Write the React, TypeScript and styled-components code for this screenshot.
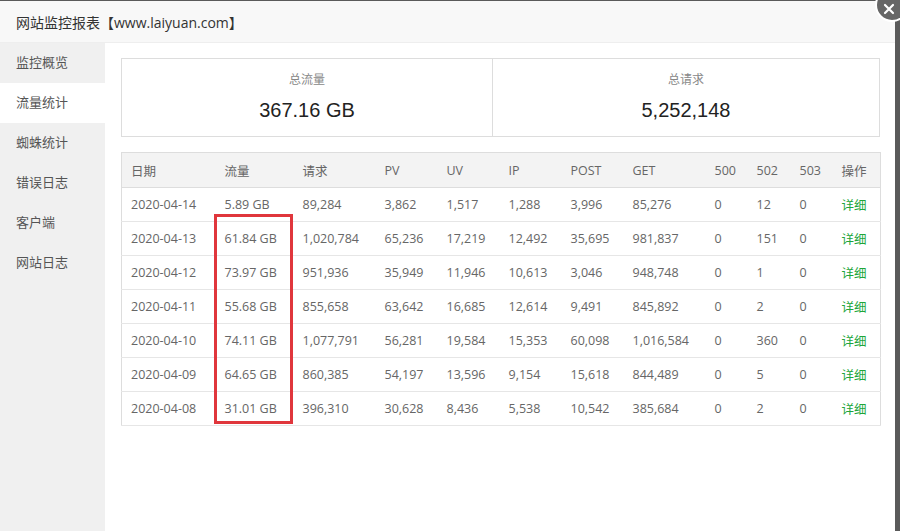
import React from 'react';
import styled, { createGlobalStyle } from 'styled-components';

const GlobalStyle = createGlobalStyle`
  html, body {
    margin: 0;
    padding: 0;
    background: #5a5a5a;
    overflow: hidden;
  }
  body {
    font-family: "Open Sans", "Noto Sans CJK SC", sans-serif;
  }
`;

const Page = styled.div`
  width: 900px;
  height: 531px;
  padding-top: 1px;
  box-sizing: border-box;
  position: relative;
`;

const Dialog = styled.div`
  width: 895px;
  height: 530px;
  background: #fff;
  display: flex;
  flex-direction: column;
`;

const TitleBar = styled.div`
  height: 42px;
  flex-shrink: 0;
  box-sizing: border-box;
  background: #f8f8f8;
  border-bottom: 1px solid #eee;
  padding-left: 16px;
  display: flex;
  align-items: center;
  font-size: 14px;
  color: #333;
`;

const Close = styled.div`
  position: absolute;
  top: -12px;
  right: -9px;
  width: 30px;
  height: 30px;
  border-radius: 50%;
  background: #666;
  border: 2px solid #fff;
  display: flex;
  align-items: center;
  justify-content: center;
`;

const Body = styled.div`
  flex: 1;
  display: flex;
`;

const Side = styled.div`
  width: 105px;
  background: #f0f0f0;
  display: flex;
  flex-direction: column;
`;

const SideItem = styled.div<{ $active?: boolean }>`
  height: 40px;
  box-sizing: border-box;
  padding: 0 0 3px 16px;
  display: flex;
  align-items: center;
  font-size: 13px;
  color: #555;
  background: ${p => (p.$active ? '#fff' : 'transparent')};
`;

const Main = styled.div`
  flex: 1;
  padding: 15px 15px 0 16px;
  display: flex;
  flex-direction: column;
  gap: 15px;
`;

const Summary = styled.div`
  height: 79px;
  box-sizing: border-box;
  border: 1px solid #ddd;
  display: grid;
  grid-template-columns: 371px 1fr;
`;

const Stat = styled.div<{ $first?: boolean }>`
  display: flex;
  flex-direction: column;
  align-items: center;
  padding-top: 13px;
  border-right: ${p => (p.$first ? '1px solid #ddd' : 'none')};
`;

const StatLabel = styled.div`
  font-size: 12px;
  color: #888;
  line-height: 16px;
`;

const StatValue = styled.div`
  margin-top: 10px;
  font-family: "Liberation Sans", Arial, sans-serif;
  font-size: 20px;
  color: #222;
  line-height: 24px;
`;

const TableWrap = styled.div`
  position: relative;
  width: 759px;
`;

const Table = styled.table`
  width: 100%;
  border-collapse: collapse;
  border: 1px solid #ddd;
  table-layout: fixed;
  font-size: 12.5px;
  color: #666;
`;

const Th = styled.th`
  height: 34px;
  padding: 0 0 0 9px;
  text-align: left;
  font-weight: normal;
  background: #f3f3f3;
  border-bottom: 1px solid #ddd;
  color: #666;
`;

const Td = styled.td`
  height: 33px;
  padding: 0 0 0 9px;
  border-bottom: 1px solid #e6e6e6;
  white-space: nowrap;
`;

const Link = styled.span`
  color: #20a53a;
`;

const Highlight = styled.div`
  position: absolute;
  left: 93px;
  top: 62px;
  width: 73px;
  height: 204px;
  border: 3px solid #e0363c;
`;

const cols = [94, 78, 82, 62, 62, 62, 62, 82, 42, 43, 42, 48];
const heads = ['日期', '流量', '请求', 'PV', 'UV', 'IP', 'POST', 'GET', '500', '502', '503', '操作'];

const rows = [
  ['2020-04-14', '5.89 GB', '89,284', '3,862', '1,517', '1,288', '3,996', '85,276', '0', '12', '0'],
  ['2020-04-13', '61.84 GB', '1,020,784', '65,236', '17,219', '12,492', '35,695', '981,837', '0', '151', '0'],
  ['2020-04-12', '73.97 GB', '951,936', '35,949', '11,946', '10,613', '3,046', '948,748', '0', '1', '0'],
  ['2020-04-11', '55.68 GB', '855,658', '63,642', '16,685', '12,614', '9,491', '845,892', '0', '2', '0'],
  ['2020-04-10', '74.11 GB', '1,077,791', '56,281', '19,584', '15,353', '60,098', '1,016,584', '0', '360', '0'],
  ['2020-04-09', '64.65 GB', '860,385', '54,197', '13,596', '9,154', '15,618', '844,489', '0', '5', '0'],
  ['2020-04-08', '31.01 GB', '396,310', '30,628', '8,436', '5,538', '10,542', '385,684', '0', '2', '0'],
];

const menu = ['监控概览', '流量统计', '蜘蛛统计', '错误日志', '客户端', '网站日志'];

export default function App() {
  return (
    <Page>
      <GlobalStyle />
      <Dialog>
        <TitleBar>网站监控报表【www.laiyuan.com】</TitleBar>
        <Body>
          <Side>
            {menu.map(m => (
              <SideItem key={m} $active={m === '流量统计'}>{m}</SideItem>
            ))}
          </Side>
          <Main>
            <Summary>
              <Stat $first>
                <StatLabel>总流量</StatLabel>
                <StatValue>367.16 GB</StatValue>
              </Stat>
              <Stat>
                <StatLabel>总请求</StatLabel>
                <StatValue>5,252,148</StatValue>
              </Stat>
            </Summary>
            <TableWrap>
              <Table>
                <colgroup>
                  {cols.map((w, i) => <col key={i} style={{ width: w }} />)}
                </colgroup>
                <thead>
                  <tr>{heads.map(h => <Th key={h}>{h}</Th>)}</tr>
                </thead>
                <tbody>
                  {rows.map(r => (
                    <tr key={r[0]}>
                      {r.map((c, i) => <Td key={i}>{c}</Td>)}
                      <Td><Link>详细</Link></Td>
                    </tr>
                  ))}
                </tbody>
              </Table>
              <Highlight />
            </TableWrap>
          </Main>
        </Body>
      </Dialog>
      <Close>
        <svg width="12" height="12" viewBox="0 0 12 12" style={{ marginTop: 8, marginRight: 6 }}>
          <path d="M2 2 L10 10 M10 2 L2 10" stroke="#fff" strokeWidth="2.2" strokeLinecap="round" />
        </svg>
      </Close>
    </Page>
  );
}
